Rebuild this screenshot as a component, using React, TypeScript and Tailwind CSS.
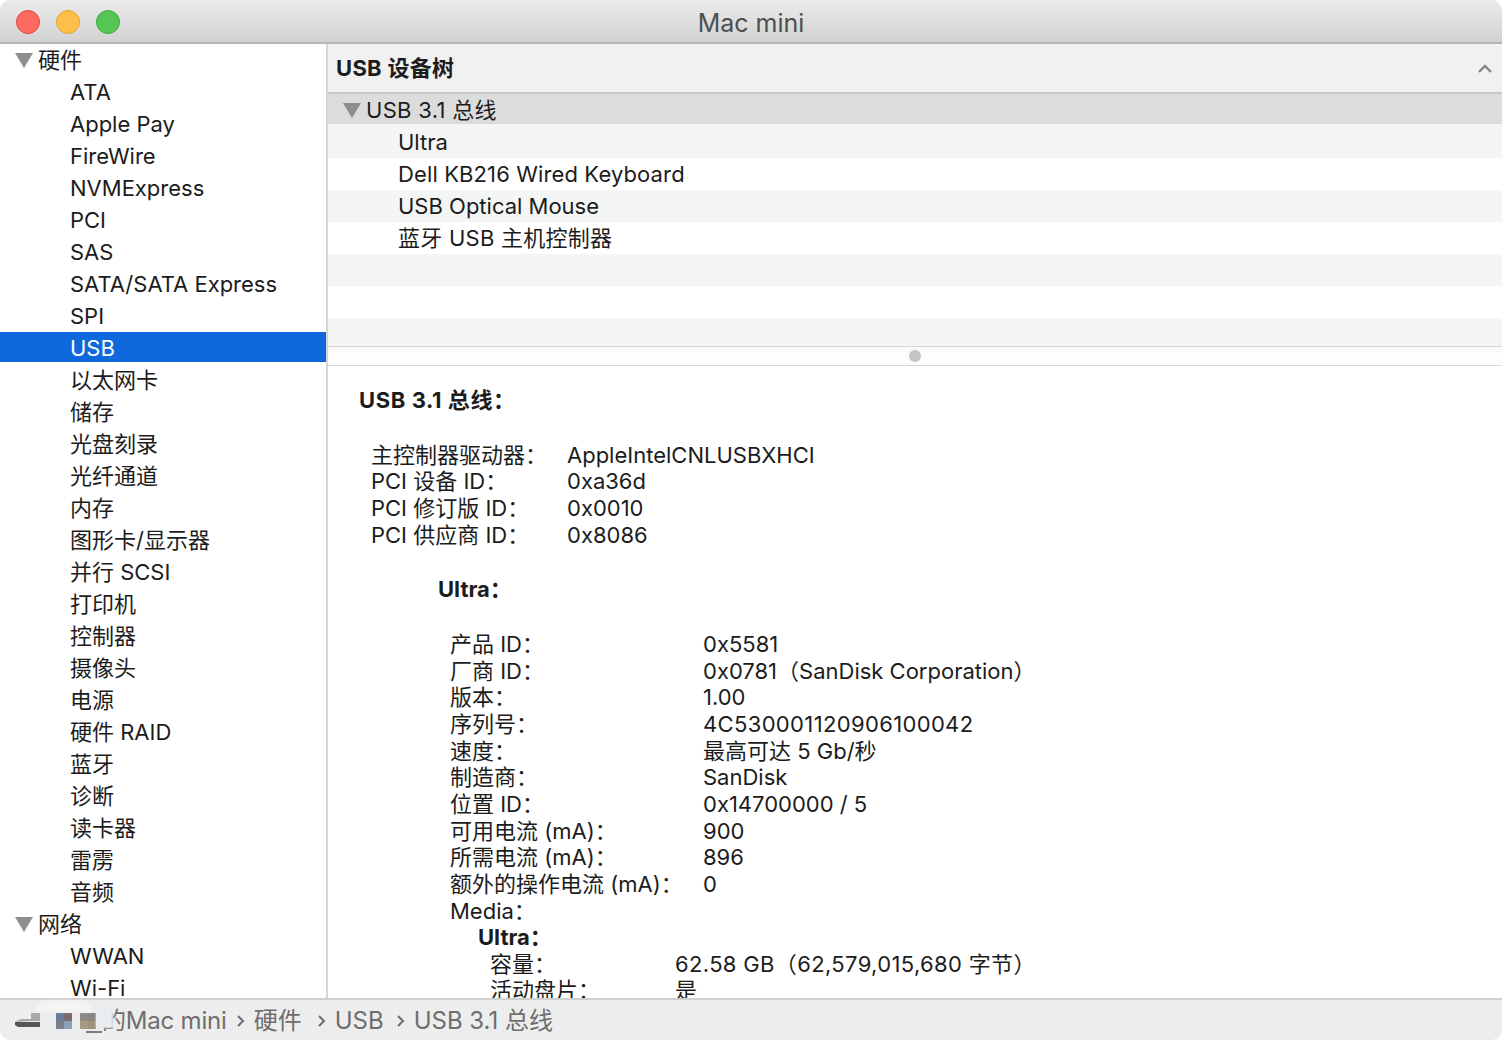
const font = "font-['Inter','Noto_Sans_CJK_SC',sans-serif]"

const sidebarTop = [
  "ATA", "Apple Pay", "FireWire", "NVMExpress", "PCI", "SAS", "SATA/SATA Express", "SPI", "USB",
  "以太网卡", "储存", "光盘刻录", "光纤通道", "内存", "图形卡/显示器", "并行 SCSI", "打印机", "控制器",
  "摄像头", "电源", "硬件 RAID", "蓝牙", "诊断", "读卡器", "雷雳", "音频",
]

const busInfo = [
  ["主控制器驱动器：", "AppleIntelCNLUSBXHCI"],
  ["PCI 设备 ID：", "0xa36d"],
  ["PCI 修订版 ID：", "0x0010"],
  ["PCI 供应商 ID：", "0x8086"],
]

const ultraInfo = [
  ["产品 ID：", "0x5581"],
  ["厂商 ID：", "0x0781（SanDisk Corporation）"],
  ["版本：", "1.00"],
  ["序列号：", "4C530001120906100042"],
  ["速度：", "最高可达 5 Gb/秒"],
  ["制造商：", "SanDisk"],
  ["位置 ID：", "0x14700000 / 5"],
  ["可用电流 (mA)：", "900"],
  ["所需电流 (mA)：", "896"],
  ["额外的操作电流 (mA)：", "0"],
]

function Triangle() {
  return (
    <svg width="18" height="16" viewBox="0 0 18 16" className="shrink-0">
      <path d="M0 1h18L9 16z" fill="#8e8e8e" />
    </svg>
  )
}

function GroupRow({ label }: { label: string }) {
  return (
    <div className="flex h-8 items-center pl-[15px]">
      <Triangle />
      <span className="ml-[5px]">{label}</span>
    </div>
  )
}

function SideRow({ label }: { label: string }) {
  const selected = label === "USB"
  return (
    <div className={selected ? "mb-[2px] flex h-[30px] items-center bg-[#0f68dc] pl-[70px] pt-[2px] text-white" : "flex h-8 items-center pl-[70px]"}>
      {label}
    </div>
  )
}

function Crumb({ label, gap }: { label: string; gap: string }) {
  return (
    <>
      <svg width="10" height="14" viewBox="0 0 10 14" className={`${gap} mr-[8px] shrink-0`}>
        <path d="M2 2l5 5-5 5" fill="none" stroke="#6e6e6e" strokeWidth="2" />
      </svg>
      <span>{label}</span>
    </>
  )
}

export default function App() {
  return (
    <div className={`${font} flex h-[1040px] w-[1502px] flex-col overflow-hidden bg-white text-[22px] text-[#1c1c1c]`}>
      {/* title bar */}
      <div className="relative flex h-11 shrink-0 items-center justify-center rounded-t-[10px] border-b-2 border-[#b5b5b5] bg-gradient-to-b from-[#ebebeb] to-[#d2d2d2] pt-[6px]">
        <div className="absolute left-4 top-[10px] flex gap-4">
          <div className="h-6 w-6 rounded-full border border-[#e2463f] bg-[#fc6a60]" />
          <div className="h-6 w-6 rounded-full border border-[#e0a52f] bg-[#fdbe4a]" />
          <div className="h-6 w-6 rounded-full border border-[#3ea83c] bg-[#55c654]" />
        </div>
        <span className="text-[25px] text-[#4e4e4e]">Mac mini</span>
      </div>

      <div className="flex min-h-0 flex-1">
        {/* sidebar */}
        <div className="w-[328px] shrink-0 overflow-hidden border-r-2 border-[#d6d6d6]">
          <GroupRow label="硬件" />
          {sidebarTop.map((s) => (
            <SideRow key={s} label={s} />
          ))}
          <GroupRow label="网络" />
          <SideRow label="WWAN" />
          <SideRow label="Wi-Fi" />
        </div>

        <div className="flex min-w-0 flex-1 flex-col">
          {/* device tree */}
          <div className="flex h-[50px] shrink-0 items-center justify-between border-b-2 border-[#c8c8c8] bg-[#f1f1f1] pl-2 pr-[10px]">
            <span className="font-bold tracking-[0.3px]">USB 设备树</span>
            <svg width="14" height="9" viewBox="0 0 14 9">
              <path d="M1 8l6-6 6 6" fill="none" stroke="#858585" strokeWidth="2.4" />
            </svg>
          </div>
          <div className="flex h-[30px] items-center bg-[#dcdcdc] pl-[15px] pt-[2px]">
            <Triangle />
            <span className="ml-[5px] tracking-[0.3px]">USB 3.1 总线</span>
          </div>
          <div className="flex h-[34px] items-center bg-[#f4f5f5] pl-[70px] pt-[2px]">Ultra</div>
          <div className="flex h-8 items-center pl-[70px] tracking-[0.12px]">Dell KB216 Wired Keyboard</div>
          <div className="flex h-8 items-center bg-[#f4f5f5] pl-[70px]">USB Optical Mouse</div>
          <div className="flex h-8 items-center pl-[70px] tracking-[0.25px]">蓝牙 USB 主机控制器</div>
          <div className="h-8 bg-[#f4f5f5]" />
          <div className="h-8" />
          <div className="h-7 bg-[#f4f5f5]" />

          {/* splitter */}
          <div className="flex h-5 shrink-0 items-center justify-center border-y border-[#d8d8d8] bg-gradient-to-b from-[#fafafa] to-white">
            <div className="h-3 w-3 rounded-full bg-[#c4c4c4]" />
          </div>

          {/* details */}
          <div className="min-h-0 flex-1 overflow-hidden pl-[31px] pt-[21px] leading-[26.65px]">
            <div className="font-bold tracking-[0.6px]">USB 3.1 总线：</div>
            <div className="mt-[28px] pl-[12px]">
              {busInfo.map(([k, v]) => (
                <div key={k} className="grid grid-cols-[196px_1fr]">
                  <span>{k}</span>
                  <span>{v}</span>
                </div>
              ))}
            </div>
            <div className="mt-[28px] pl-[79px] font-bold">Ultra：</div>
            <div className="mt-[28px] pl-[91px]">
              {ultraInfo.map(([k, v]) => (
                <div key={k} className="grid grid-cols-[253px_1fr]">
                  <span>{k}</span>
                  <span className={k === "序列号：" ? "tracking-[0.35px]" : ""}>{v}</span>
                </div>
              ))}
              <div>Media：</div>
              <div className="pl-7 font-bold">Ultra：</div>
              <div className="grid grid-cols-[185px_1fr] pl-10">
                <span>容量：</span>
                <span className="tracking-[0.35px]">62.58 GB（62,579,015,680 字节）</span>
                <span>活动盘片：</span>
                <span>是</span>
              </div>
            </div>
          </div>
        </div>
      </div>

      {/* path bar */}
      <div className="relative flex h-[42px] shrink-0 items-center rounded-b-[10px] border-t-2 border-[#d0d0d0] bg-[#ededed] pl-[15px] pt-[2px] text-[24px] text-[#6e6e6e]">
        <svg width="25" height="16" viewBox="0 0 25 16" className="shrink-0">
          <path d="M0 9l6-3h10V0h9v8H16z" fill="#a8a8a8" />
          <path d="M0 9h25v5H3L0 12z" fill="#555555" />
        </svg>
        <svg width="40" height="16" viewBox="0 0 40 16" className="ml-4 shrink-0">
          <rect x="0" y="0" width="8" height="8" fill="#6b7b9e" />
          <rect x="8" y="0" width="8" height="8" fill="#7a6a6a" />
          <rect x="0" y="8" width="8" height="8" fill="#7a8088" />
          <rect x="8" y="8" width="8" height="8" fill="#8aa0b5" />
          <rect x="24" y="0" width="8" height="8" fill="#8a8a85" />
          <rect x="32" y="0" width="8" height="8" fill="#8a8580" />
          <rect x="24" y="8" width="8" height="8" fill="#a89a80" />
          <rect x="32" y="8" width="8" height="8" fill="#a09080" />
        </svg>
        <span className="ml-[6px] tracking-[-0.2px]">的Mac mini</span>
        <Crumb label="硬件" gap="ml-[9px]" />
        <Crumb label="USB" gap="ml-[15px]" />
        <Crumb label="USB 3.1 总线" gap="ml-[12px]" />
        {/* blurred-out patch over the first characters of the machine name */}
        <div className="absolute left-[96px] top-[4px] h-[24px] w-[17px] bg-[#e9edef] blur-[1px]" />
        <div className="absolute left-[36px] top-[1px] h-[11px] w-[56px] rounded-t-full bg-[#f4f4f4] blur-[1px]" />
        <div className="absolute left-[86px] top-[31px] h-[2px] w-[16px] bg-[#7c7c7c]" />
      </div>
    </div>
  )
}
